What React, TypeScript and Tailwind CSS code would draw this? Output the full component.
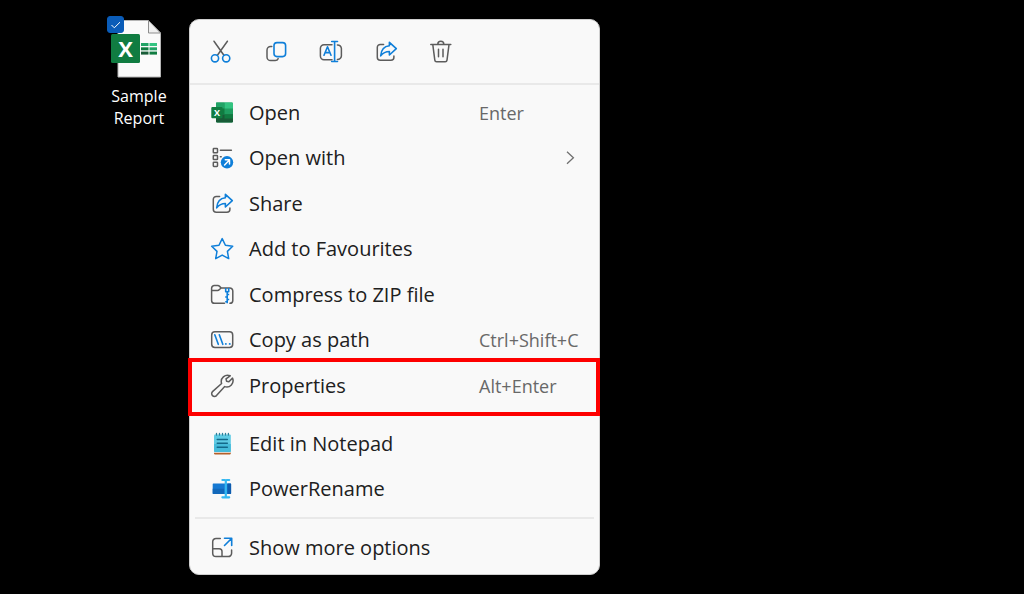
import { useState, type ReactNode } from "react";

const INK = "#5c5c5c";
const BLUE = "#0f7fd9";

function Icon({ children }: { children: ReactNode }) {
  return (
    <svg
      viewBox="0 0 24 24"
      className="size-6 shrink-0"
      fill="none"
      stroke={INK}
      strokeWidth="1.5"
      strokeLinecap="round"
      strokeLinejoin="round"
      aria-hidden="true"
    >
      {children}
    </svg>
  );
}

const CutIcon = () => (
  <Icon>
    <path d="M5 1.2 14.9 15.2M18.4 1.2 8.4 15.2" />
    <g stroke={BLUE} strokeWidth="1.6">
      <circle cx="6" cy="18.3" r="3.6" />
      <circle cx="17.2" cy="18.3" r="3.6" />
    </g>
  </Icon>
);

const CopyIcon = () => (
  <Icon>
    <path d="M7.8 6.6H6.6a3.6 3.6 0 0 0-3.6 3.6V17a3.6 3.6 0 0 0 3.6 3.6h4.6a3.4 3.4 0 0 0 3-2" />
    <rect x="10" y="2.6" width="11.6" height="14" rx="3" stroke={BLUE} strokeWidth="1.6" />
  </Icon>
);

const RenameIcon = () => (
  <Icon>
    <path d="M13 4.7H5A3.6 3.6 0 0 0 1.4 8.3v7.8A3.6 3.6 0 0 0 5 19.7h8M18.4 4.9a3.8 3.8 0 0 1 4 3.6v7.4a3.8 3.8 0 0 1-4 3.6" />
    <g stroke={BLUE} strokeWidth="1.6">
      <path d="m5 15.2 3.5-8.4 3.5 8.4M6.3 12.6h4.4" />
      <path d="M12.7 1.5h5.8M15.6 1.5v20M12.7 21.5h5.8" />
    </g>
  </Icon>
);

const ShareIcon = () => (
  <Icon>
    <path d="M9.6 4.4H6.3a3 3 0 0 0-3 3v9.8a3 3 0 0 0 3 3h10.6a3 3 0 0 0 3-3V16" />
    <path
      d="m15.4 2.3 6.9 6.4-6.9 6.3v-3.5c-4 0-6.3 1.2-8.7 4.3.4-5.8 3.2-9.6 8.7-10.1z"
      stroke={BLUE}
      strokeWidth="1.6"
    />
  </Icon>
);

const DeleteIcon = () => (
  <Icon>
    <path d="M1.8 4.4h20M8.8 4.2a3 3 0 0 1 6 0M3.8 4.6l2 15.6a1.8 1.8 0 0 0 1.8 1.6h8.6a1.8 1.8 0 0 0 1.8-1.6l2-15.6M9.5 9.3v7.4M14 9.3v7.4" />
  </Icon>
);

const ExcelIcon = () => (
  <Icon>
    <g stroke="none">
      <rect x="6" y="1.5" width="17" height="20" rx="1.2" fill="#1f9e60" />
      <path d="M14.5 1.5h7.3A1.2 1.2 0 0 1 23 2.7v4.8h-8.5z" fill="#33c481" />
      <path d="M6 1.5h8.5v6H6z" fill="#21a366" />
      <path d="M6 7.5h8.5v6H6z" fill="#107c41" />
      <path d="M6 13.5h17v6.8a1.2 1.2 0 0 1-1.2 1.2H7.2A1.2 1.2 0 0 1 6 20.3z" fill="#185c37" />
      <path d="M14.5 13.5H23v4h-8.5z" fill="#107c41" />
      <rect x="1.3" y="6" width="11.2" height="11.2" rx="1" fill="#107c41" />
      <text x="6.9" y="14.8" textAnchor="middle" fontSize="9" fontWeight="700" fill="#fff" fontFamily="Open Sans, sans-serif">
        X
      </text>
    </g>
  </Icon>
);

const OpenWithIcon = () => (
  <Icon>
    <rect x="3.3" y="2.6" width="4.2" height="4.2" rx=".6" />
    <rect x="3.3" y="9.4" width="4.2" height="4.2" rx=".6" />
    <rect x="3.3" y="16.2" width="4.2" height="4.2" rx=".6" />
    <path d="M10.4 4.3h11M10.4 10.8h.8" />
    <circle cx="17" cy="16.3" r="6.2" fill={BLUE} stroke="none" />
    <path d="m14.6 18.9 4.8-4.9M15.3 13.8h4.2V18" stroke="#fff" strokeWidth="1.5" />
  </Icon>
);

const StarIcon = () => (
  <Icon>
    <path
      d="m12.2 1.6 3.2 6.7 7.3 1-5.3 5.1 1.3 7.2-6.5-3.5-6.5 3.5L7 14.4 1.7 9.3l7.3-1z"
      stroke={BLUE}
      strokeWidth="1.5"
    />
  </Icon>
);

const ZipIcon = () => (
  <Icon>
    <path d="M14.5 20.3h-10a2.9 2.9 0 0 1-2.9-2.9V5.3a2.7 2.7 0 0 1 2.7-2.7h3.5c.7 0 1.3.3 1.8.8L11.2 5h8.7a2.9 2.9 0 0 1 2.9 2.9v9.5a2.9 2.9 0 0 1-2.9 2.9M1.6 7.4h5.9c.9 0 1.4-.3 1.9-.9L11.2 5" />
    <g stroke={BLUE} strokeWidth="1.6" strokeLinecap="butt">
      <path d="M15.7 5v3.8h3V5M17.2 8.8v11.5M17.2 11.5h2M15.2 14h2M17.2 16.5h2M15.2 18.8h2" />
    </g>
  </Icon>
);

const PathIcon = () => (
  <Icon>
    <rect x="1.7" y="3.7" width="21" height="15.8" rx="3.2" />
    <path d="m4.8 6.8 3.5 9.5M9.3 6.8l3.5 9.5" stroke={BLUE} strokeWidth="1.6" />
    <path d="M15.8 15.9h.1M19.7 15.9h.1" stroke={BLUE} strokeWidth="1.9" />
  </Icon>
);

const WrenchIcon = () => (
  <Icon>
    <path d="M20.2 1.8a6.3 6.3 0 0 0-8.6 7.7L2.5 17.6a2.8 2.8 0 1 0 4 4l8.2-9a6.3 6.3 0 0 0 7.8-8.5l-3.6 3.6-2.3-.5-.6-2.3z" />
  </Icon>
);

const NotepadIcon = () => (
  <Icon>
    <g stroke="none">
      <rect x="4" y="19" width="16.8" height="3.4" rx=".8" fill="#b5602a" />
      <rect x="4" y="18.5" width="16.8" height="2.3" fill="#e9eef0" />
      <rect x="4" y="2.4" width="16.8" height="17.6" rx="1" fill="#5fcbe4" />
      <path d="M4 12h16.8v7a1 1 0 0 1-1 1H5a1 1 0 0 1-1-1z" fill="#45bbda" />
    </g>
    <path d="M6.5 1.5v1.6M9.5 1.5v1.6M12.5 1.5v1.6M15.5 1.5v1.6M18.4 1.5v1.6" stroke="#2b7f9a" strokeWidth="1.3" />
    <path d="M7.3 7.5h10M7.3 11.3h10M7.3 15.3h10" stroke="#12698a" strokeWidth="1.6" />
  </Icon>
);

const PowerRenameIcon = () => (
  <Icon>
    <g stroke="none">
      <rect x="2.7" y="6.5" width="18.4" height="10.4" rx=".6" fill="#1679d2" />
      <path d="M2.7 11.7h11.5v5.2H3.3a.6.6 0 0 1-.6-.6z" fill="#1268ba" />
      <path d="M17.5 6.5h3a.6.6 0 0 1 .6.6v9.200a.6.6 0 0 1-.6.6h-3z" fill="#0e5cae" />
    </g>
    <path
      d="M12.4 3h2.4c.6 0 1 .5 1 1 0-.5.4-1 1-1h2.4M15.8 4v15.300M12.400 20.300h2.400c.6 0 1-.5 1-1 0 .5.4 1 1 1h2.400"
      stroke="#35b8f1"
      strokeWidth="2.2"
    />
  </Icon>
);

const MoreIcon = () => (
  <Icon>
    <path d="M10.3 2.4H6A3.3 3.3 0 0 0 2.7 5.7v11.6A3.3 3.3 0 0 0 6 20.6h12.3a3.3 3.3 0 0 0 3.3-3.3V14M2.7 12.8h6.5a2.8 2.8 0 0 1 2.8 2.8v5" />
    <path d="m14.5 9.5 7-7M14.5 2.3h7.2v7.2" stroke={BLUE} strokeWidth="1.6" />
  </Icon>
);

type Item = { label: string; icon: ReactNode; keys?: string; submenu?: boolean; marked?: boolean };

const tools = [
  { label: "Cut", icon: <CutIcon /> },
  { label: "Copy", icon: <CopyIcon /> },
  { label: "Rename", icon: <RenameIcon /> },
  { label: "Share", icon: <ShareIcon /> },
  { label: "Delete", icon: <DeleteIcon /> },
];

const fileItems: Item[] = [
  { label: "Open", icon: <ExcelIcon />, keys: "Enter" },
  { label: "Open with", icon: <OpenWithIcon />, submenu: true },
  { label: "Share", icon: <ShareIcon /> },
  { label: "Add to Favourites", icon: <StarIcon /> },
  { label: "Compress to ZIP file", icon: <ZipIcon /> },
  { label: "Copy as path", icon: <PathIcon />, keys: "Ctrl+Shift+C" },
  { label: "Properties", icon: <WrenchIcon />, keys: "Alt+Enter", marked: true },
];

const appItems: Item[] = [
  { label: "Edit in Notepad", icon: <NotepadIcon /> },
  { label: "PowerRename", icon: <PowerRenameIcon /> },
];

const moreItems: Item[] = [{ label: "Show more options", icon: <MoreIcon /> }];

function MenuGroup({ items }: { items: Item[] }) {
  return (
    <ul>
      {items.map((item) => (
        <li key={item.label} className="relative h-[45px] even:h-[46px]">
          <button
            type="button"
            className="flex h-full w-full items-center pr-[18px] pl-5 text-left text-[20px] leading-6 text-[#202020]"
          >
            {item.icon}
            <span className="ml-[15px] flex-1 whitespace-nowrap">{item.label}</span>
            {item.keys && <span className="w-[102px] text-[18px] whitespace-nowrap text-[#686868]">{item.keys}</span>}
            {item.submenu && (
              <svg viewBox="0 0 12 16" className="mr-1 h-4 w-3" fill="none" stroke="#707070" strokeWidth="1.3" aria-hidden="true">
                <path d="m2 1.8 6.4 6L2 13.8" />
              </svg>
            )}
          </button>
          {item.marked && (
            <span className="pointer-events-none absolute -top-[5px] -right-px -bottom-2 -left-0.5 border-4 border-[#fe0000]" />
          )}
        </li>
      ))}
    </ul>
  );
}

function DesktopFile() {
  const [selected, setSelected] = useState(true);
  return (
    <div className="relative flex w-[64px] flex-col items-center">
      <svg viewBox="0 0 64 62" className="h-[62px] w-16" aria-hidden="true">
        <path d="M11 4.5h30.5L53.5 17v44H11z" fill="#fafafa" stroke="#b5b5b5" />
        <path d="M41.5 4.5V17h12z" fill="#f0f0f0" stroke="#8d8d8d" />
        <g>
          <path d="M34 27h7.5v3H34z" fill="#21a366" />
          <path d="M42.5 27H50v3h-7.5z" fill="#33c481" />
          <path d="M34 31.3h7.5v3H34z" fill="#107c41" />
          <path d="M42.5 31.3H50v3h-7.5z" fill="#21a366" />
          <path d="M34 35.6h7.5v3H34z" fill="#185c37" />
          <path d="M42.5 35.6H50v3h-7.5z" fill="#107c41" />
        </g>
        <rect x="4" y="18" width="29" height="29" rx="1.5" fill="#107c41" />
        <text x="18.5" y="40.5" textAnchor="middle" fontSize="22" fontWeight="700" fill="#fff" fontFamily="Open Sans, sans-serif">
          X
        </text>
      </svg>
      <label htmlFor="sample-report" className="mt-[7px] text-center text-[16px] leading-[22px] text-white">
        Sample Report
      </label>
      <input
        id="sample-report"
        type="checkbox"
        checked={selected}
        onChange={(e) => setSelected(e.target.checked)}
        className="peer absolute top-0 left-0 size-[17px] appearance-none rounded-[3px] border border-[#0a5cb8] checked:bg-[#0a5cb8]"
      />
      <svg
        viewBox="0 0 17 17"
        className="pointer-events-none absolute top-0 left-0 hidden size-[17px] peer-checked:block"
        fill="none"
        stroke="#fff"
        aria-hidden="true"
      >
        <path d="m4.5 9 2.8 2.8L13 6.2" />
      </svg>
    </div>
  );
}

export default function App() {
  return (
    <main className="flex min-h-screen items-start bg-black pt-4 pb-5 pl-[107px] font-['Open_Sans','Noto_Sans',sans-serif]">
      <DesktopFile />
      <nav
        aria-label="File actions"
        className="mt-[3px] ml-[18px] w-[411px] rounded-[10px] border border-[#cfcfcf] bg-[#f9f9f9]"
      >
        <div className="flex h-[65px] items-center border-b-2 border-[#e9e9e9] pt-px pl-[3px]">
          {tools.map((tool) => (
            <button key={tool.label} type="button" aria-label={tool.label} className="flex h-11 w-[55px] items-center justify-center">
              {tool.icon}
            </button>
          ))}
        </div>
        <div className="pt-[5px] pb-1">
          <MenuGroup items={fileItems} />
          <hr className="mx-[5px] mt-1.5 mb-[5px] border-t-2 border-[#e9e9e9]" />
          <MenuGroup items={appItems} />
          <hr className="mx-[5px] mt-[5px] mb-1.5 border-t-2 border-[#e9e9e9]" />
          <MenuGroup items={moreItems} />
        </div>
      </nav>
    </main>
  );
}
